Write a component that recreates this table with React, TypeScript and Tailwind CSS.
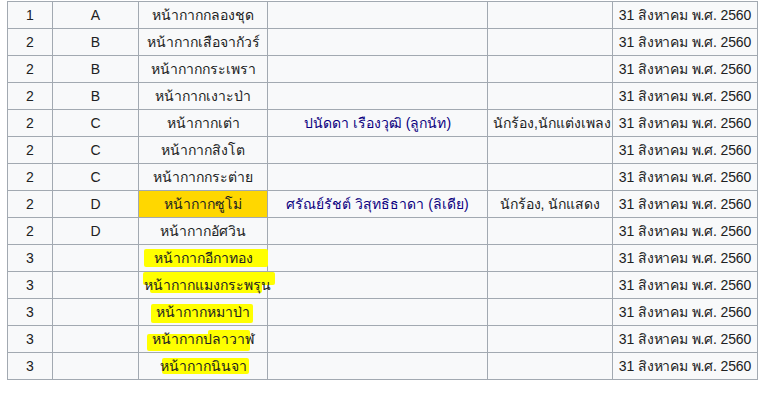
type Mark = { left: number; top: number; width: number; height: number };

type Row = {
  season: string;
  group: string;
  mask: string;
  person?: string;
  job?: string;
  date: string;
  gold?: boolean;
  marks?: Mark[];
};

const DATE = "31 สิงหาคม พ.ศ. 2560";

const rows: Row[] = [
  { season: "1", group: "A", mask: "หน้ากากกลองชุด", date: DATE },
  { season: "2", group: "B", mask: "หน้ากากเสือจากัวร์", date: DATE },
  { season: "2", group: "B", mask: "หน้ากากกระเพรา", date: DATE },
  { season: "2", group: "B", mask: "หน้ากากเงาะป่า", date: DATE },
  { season: "2", group: "C", mask: "หน้ากากเต่า", person: "ปนัดดา เรืองวุฒิ (ลูกนัท)", job: "นักร้อง,นักแต่งเพลง", date: DATE },
  { season: "2", group: "C", mask: "หน้ากากสิงโต", date: DATE },
  { season: "2", group: "C", mask: "หน้ากากกระต่าย", date: DATE },
  { season: "2", group: "D", mask: "หน้ากากซูโม่", person: "ศรัณย์รัชต์ วิสุทธิธาดา (ลิเดีย)", job: "นักร้อง, นักแสดง", date: DATE, gold: true },
  { season: "2", group: "D", mask: "หน้ากากอัศวิน", date: DATE },
  {
    season: "3", group: "", mask: "หน้ากากอีกาทอง", date: DATE,
    marks: [{ left: 6, top: 4, width: 124, height: 18 }],
  },
  {
    season: "3", group: "", mask: "หน้ากากแมงกระพรุน", date: DATE,
    marks: [
      { left: 5, top: 0, width: 132, height: 13 },
      { left: 12, top: 9, width: 112, height: 12 },
    ],
  },
  {
    season: "3", group: "", mask: "หน้ากากหมาป่า", date: DATE,
    marks: [{ left: 13, top: 5, width: 102, height: 19 }],
  },
  {
    season: "3", group: "", mask: "หน้ากากปลาวาฬ", date: DATE,
    marks: [
      { left: 9, top: 8, width: 103, height: 17 },
      { left: 70, top: 4, width: 42, height: 10 },
    ],
  },
  {
    season: "3", group: "", mask: "หน้ากากนินจา", date: DATE,
    marks: [{ left: 24, top: 5, width: 87, height: 16 }],
  },
];

function Cell({ children, className = "" }: { children?: React.ReactNode; className?: string }) {
  return (
    <td className={`border border-[#a2a9b1] px-[5px] py-0 text-center align-middle whitespace-nowrap ${className}`}>
      {children}
    </td>
  );
}

export default function App() {
  return (
    <div
      className="w-[764px] h-[393px] bg-white pt-[1px] pl-[7px] overflow-hidden"
      style={{ fontFamily: '"Liberation Sans", Arial, "Noto Sans", sans-serif' }}
    >
      <table className="table-fixed border-collapse bg-[#f8f9fa] text-[14px] text-[#202122] w-[750px]">
        <colgroup>
          <col className="w-[45px]" />
          <col className="w-[86px]" />
          <col className="w-[129px]" />
          <col className="w-[220px]" />
          <col className="w-[125px]" />
          <col className="w-[145px]" />
        </colgroup>
        <tbody>
          {rows.map((r, i) => (
            <tr key={i} className="h-[27px]">
              <Cell>{r.season}</Cell>
              <Cell>{r.group}</Cell>
              <Cell className={`relative ${r.gold ? "bg-[#ffd700]" : ""}`}>
                {r.marks?.map((m, j) => (
                  <span
                    key={j}
                    className="absolute z-0 bg-[#ffff00] rounded-[2px]"
                    style={{ left: m.left - 1, top: m.top, width: m.width, height: m.height }}
                  />
                ))}
                <span className="relative z-10">{r.mask}</span>
              </Cell>
              <Cell className="text-[#0b0080]">{r.person}</Cell>
              <Cell>{r.job}</Cell>
              <Cell className="tracking-[-0.15px]">{r.date}</Cell>
            </tr>
          ))}
        </tbody>
      </table>
    </div>
  );
}
